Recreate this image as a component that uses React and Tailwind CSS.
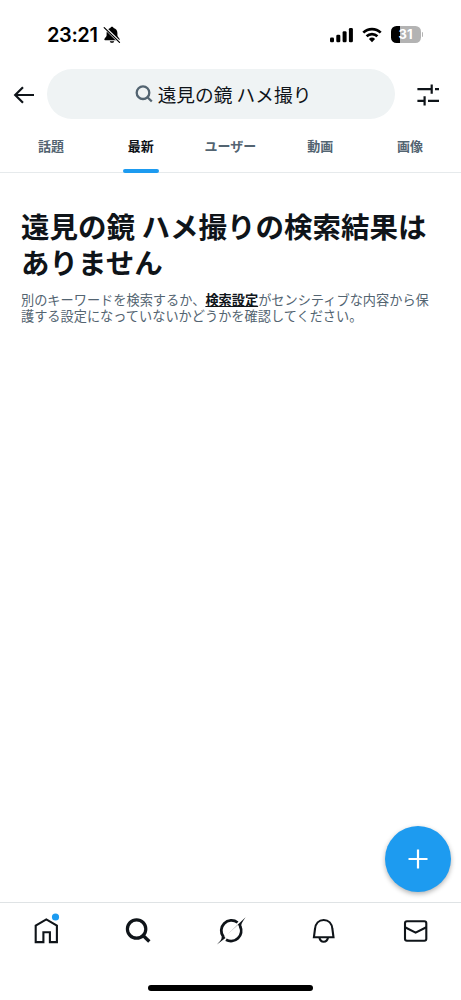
import React, { useState } from 'react';
import clsx from 'clsx';

const TABS = ['話題', '最新', 'ユーザー', '動画', '画像'];

const StatusBar = () => (
  <div className="flex h-[69px] shrink-0 items-center justify-between pl-[47px] pr-[38px]">
    <div className="flex items-center gap-1">
      <span className="w-[52px] whitespace-nowrap font-['Inter',sans-serif] text-[20px] font-semibold leading-6 tracking-[-0.4px] text-black">23:21</span>
      <svg width="18" height="18" viewBox="0 0 18 18">
        <path d="M9 .8c-.9 0-1.500.6-1.600 1.300C5 2.700 3.600 4.600 3.600 7v2.500c0 1.500-2.300 2.500-2.300 4 0 .5.300.8.800.8h13.800c.5 0 .8-.3.8-.8 0-1.500-2.300-2.500-2.300-4V7c0-2.400-1.400-4.300-3.800-4.900C10.500 1.400 9.900.8 9 .8ZM6.800 15.200h4.400c-.2 1-1.100 1.600-2.200 1.600s-2-.6-2.200-1.600Z" fill="black" />
        <path d="M1.600 1.400 17 16.400" stroke="white" strokeWidth="2.800" />
        <path d="M1.200 1.600 16.500 16.400" stroke="black" strokeWidth="1.300" strokeLinecap="round" />
      </svg>
    </div>
    <div className="flex items-center gap-[9px]">
      <svg width="23" height="16" viewBox="0 0 23 16" fill="black">
        <rect x="0" y="10.500" width="4" height="4.800" rx="1.300" />
        <rect x="6.300" y="7.700" width="4" height="7.600" rx="1.300" />
        <rect x="12.600" y="4.300" width="4" height="11" rx="1.300" />
        <rect x="18.900" y="1" width="4" height="14.300" rx="1.300" />
      </svg>
      <svg width="20" height="16" viewBox="0 0 20 16" fill="none" stroke="black" strokeWidth="2.700">
        <path d="M1.300 5.600a12.500 12.500 0 0 1 17.400 0" />
        <path d="M4.600 9.300a7.900 7.900 0 0 1 10.800 0" />
        <path d="M10 15.200 6.900 12a4.500 4.500 0 0 1 6.200 0Z" fill="black" stroke="none" />
      </svg>
      <div className="flex items-center gap-px">
        <div className="flex h-[17px] w-[30px] items-center justify-center rounded-[5.500px] bg-[linear-gradient(90deg,#000_31%,#b3b3b3_31%)] font-['Inter',sans-serif] text-[13px] font-bold leading-none text-white">
          31
        </div>
        <div className="h-[5px] w-[1.500px] rounded-r-full bg-[#b3b3b3]" />
      </div>
    </div>
  </div>
);

const SearchHeader = () => (
  <header className="flex h-[50px] shrink-0 items-center">
    <button className="flex w-[47px] justify-center pt-0.5" aria-label="戻る">
      <svg width="22" height="18" viewBox="0 0 22 18" fill="none" stroke="#0f1419" strokeWidth="2.200">
        <path d="M21 9H2.500M10 1.200 2.200 9l7.800 7.800" />
      </svg>
    </button>
    <div className="flex h-[50px] w-[348px] items-center justify-center gap-[5px] rounded-full bg-[#eff3f4] pl-1">
      <svg width="18" height="18" viewBox="0 0 18 18" fill="none" stroke="#536471" strokeWidth="2.300">
        <circle cx="8" cy="7.700" r="6.300" />
        <path d="m12.500 12.200 4.300 4.300" />
      </svg>
      <span className="whitespace-nowrap text-[18.700px] leading-6 text-[#0f1419]">遠見の鏡 ハメ撮り</span>
    </div>
    <button className="flex flex-1 justify-center pt-0.5" aria-label="フィルター">
      <svg width="22" height="22" viewBox="0 0 22 22" fill="none" stroke="#0f1419" strokeWidth="2.200">
        <path d="M.4 5.200h14.300M14.700.6v9.200M18 5.200h4M.4 16.800h7.200M7.600 12.200v9.200M11 16.800h11" />
      </svg>
    </button>
  </header>
);

const NAV_ITEMS = [
  {
    label: 'ホーム',
    icon: (
      <>
        <path d="M5.700 27.100V10.600L16.300 4.400l10.600 6.200v16.500h-7V17.300h-6.500v9.800Z" fill="none" stroke="#0f1419" strokeWidth="2.100" />
        <circle cx="25.500" cy="2" r="3.600" fill="#1d9bf0" />
      </>
    ),
  },
  {
    label: '検索',
    icon: (
      <>
        <circle cx="14.600" cy="14" r="9.200" fill="none" stroke="#0f1419" strokeWidth="3.200" />
        <path d="m21.300 20.800 4.800 4.600" stroke="#0f1419" strokeWidth="3.400" strokeLinecap="square" />
      </>
    ),
  },
  {
    label: 'Grok',
    icon: (
      <>
        <path d="M22.600 7.500A10.200 10.200 0 0 0 8.400 21.900" fill="none" stroke="#0f1419" strokeWidth="2.800" />
        <path d="M25.200 11.400A10.200 10.200 0 0 1 11 24.700" fill="none" stroke="#0f1419" strokeWidth="2.800" />
        <path d="M12.300 19.400 30.600 2.200c-1.600 2.600-3.400 4.600-4.100 6.800-.3 1-.2 2-.1 2.800l-2.300.5c-.1-1-.5-1.800-1.100-2.500Z" fill="#0f1419" />
        <path d="M1.900 29.600c2.600-2.900 5-4.800 4.800-7.600l2.500-1.200c.2.800.6 1.500 1.300 2.200Z" fill="#0f1419" />
      </>
    ),
  },
  {
    label: '通知',
    icon: (
      <>
        <path d="M6.900 22.300 8 14c.5-5.400 3.800-9 8.700-9s8.200 3.600 8.700 9l1.100 8.300Z" fill="none" stroke="#0f1419" strokeWidth="2.100" />
        <path d="M12.400 22.500c.5 2.700 2.200 4.300 4.300 4.300s3.800-1.600 4.300-4.300" fill="none" stroke="#0f1419" strokeWidth="2.100" />
      </>
    ),
  },
  {
    label: 'メッセージ',
    icon: (
      <g fill="none" stroke="#0f1419" strokeWidth="2.100">
        <rect x="6" y="6.300" width="21.300" height="19.400" rx="2" />
        <path d="m6 12.200 10.600 5.400 10.700-5.400" />
      </g>
    ),
  },
];

function App() {
  const [activeTab, setActiveTab] = useState('最新');

  return (
    <div className="flex h-[1000px] w-[461px] flex-col overflow-hidden bg-white font-['Noto_Sans_CJK_JP',sans-serif]">
      <StatusBar />
      <SearchHeader />

      <nav className="flex h-[54px] shrink-0 border-b border-[#e6eaec] px-1.5">
        {TABS.map(tab => (
          <button
            key={tab}
            onClick={() => setActiveTab(tab)}
            className={clsx(
              'relative flex flex-1 justify-center pt-[17px] text-[13px] font-bold leading-5',
              tab === activeTab ? 'text-[#0f1419]' : 'text-[#536471]'
            )}
          >
            {tab}
            {tab === activeTab && (
              <span className="absolute -bottom-px left-1/2 h-1 w-9 -translate-x-1/2 rounded-full bg-[#1d9bf0]" />
            )}
          </button>
        ))}
      </nav>

      {/* Empty state */}
      <main className="flex flex-1 flex-col px-[21px] pt-[35px]">
        <h1 className="whitespace-nowrap text-[28.500px] font-bold leading-9 text-[#0f1419]">
          遠見の鏡 ハメ撮りの検索結果は
          <br />
          ありません
        </h1>
        <p className="mt-3 whitespace-nowrap text-[13.200px] leading-4 text-[#536471]">
          別のキーワードを検索するか、
          <a className="font-bold text-[#0f1419] underline">検索設定</a>
          がセンシティブな内容から保
          <br />
          護する設定になっていないかどうかを確認してください。
        </p>
        <button
          className="-mr-[10.500px] mb-[10px] mt-auto flex size-[66px] items-center justify-center self-end rounded-full bg-[#1d9bf0] shadow-[0_2px_5px_rgba(0,0,0,0.3)]"
          aria-label="投稿"
        >
          <svg width="20" height="20" viewBox="0 0 20 20" stroke="white" strokeWidth="2.200">
            <path d="M10 .5v19M.5 10h19" />
          </svg>
        </button>
      </main>

      <footer className="flex h-[98px] shrink-0 flex-col items-center border-t border-[#dfe3e5]">
        <div className="flex w-full pt-3">
          {NAV_ITEMS.map(item => (
            <button key={item.label} aria-label={item.label} className="flex flex-1 justify-center">
              <svg width="32" height="32" viewBox="0 0 32 32" className="overflow-visible">
                {item.icon}
              </svg>
            </button>
          ))}
        </div>
        <div className="mb-[9px] mt-auto h-1.5 w-[165px] rounded-full bg-black" />
      </footer>
    </div>
  );
}

export default App;
